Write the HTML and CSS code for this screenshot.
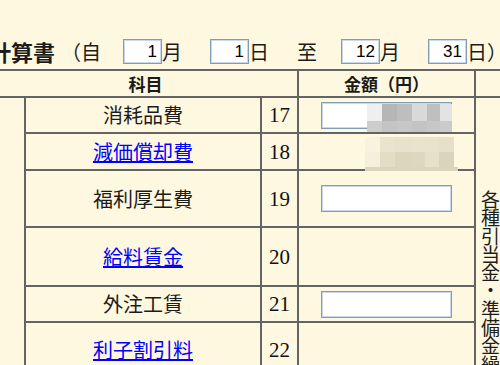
FILE: index.html
```html
<!DOCTYPE html>
<html lang="ja">
<head>
<meta charset="utf-8">
<title>計算書</title>
<link rel="stylesheet" href="styles.css">
</head>
<body>
<div class="page">
  <div class="title-row">
    <span class="doc-title">損益計算書</span>
    <span class="open">（自</span>
    <input class="date-in first" type="text" value="1"><span class="unit">月</span>
    <input class="date-in" type="text" value="1"><span class="unit">日</span>
    <span class="to">至</span>
    <input class="date-in mid" type="text" value="12"><span class="unit">月</span>
    <input class="date-in" type="text" value="31"><span class="unit">日）</span>
  </div>

  <table class="ledger">
    <colgroup>
      <col class="c-cat"><col class="c-name"><col class="c-no"><col class="c-amt"><col class="c-side">
    </colgroup>
    <tr class="h-head">
      <th colspan="3">科目</th>
      <th>金額（円）</th>
      <th></th>
    </tr>
    <tr class="h-17">
      <td class="cat" rowspan="8"></td>
      <td class="name">消耗品費</td>
      <td class="no">17</td>
      <td class="amt">
        <div class="field">
          <input class="amt-in" type="text">
          <div class="mosaic mosaic-gray"><i></i><i></i><i></i><i></i><i></i><i></i><i></i><i></i><i></i><i></i><i></i><i></i></div>
        </div>
      </td>
      <td class="side" rowspan="8">各種引当金・準備金繰入額</td>
    </tr>
    <tr class="h-18">
      <td class="name"><a href="#">減価償却費</a></td>
      <td class="no">18</td>
      <td class="amt amt-hidden">
        <div class="mosaic mosaic-beige"><i></i><i></i><i></i><i></i><i></i><i></i><i></i><i></i><i></i><i></i><i></i><i></i></div>
        <div class="mosaic-strip"></div>
      </td>
    </tr>
    <tr class="h-19">
      <td class="name">福利厚生費</td>
      <td class="no">19</td>
      <td class="amt"><input class="amt-in" type="text"></td>
    </tr>
    <tr class="h-20">
      <td class="name"><a href="#">給料賃金</a></td>
      <td class="no">20</td>
      <td class="amt"></td>
    </tr>
    <tr class="h-21">
      <td class="name">外注工賃</td>
      <td class="no">21</td>
      <td class="amt"><input class="amt-in" type="text"></td>
    </tr>
    <tr class="h-22">
      <td class="name"><a href="#">利子割引料</a></td>
      <td class="no">22</td>
      <td class="amt"></td>
    </tr>
    <tr class="h-more">
      <td class="name">租税公課</td>
      <td class="no">23</td>
      <td class="amt"></td>
    </tr>
    <tr class="h-more">
      <td class="name">雑費</td>
      <td class="no">24</td>
      <td class="amt"></td>
    </tr>
  </table>
</div>
</body>
</html>
```

FILE: styles.css
```css
* { box-sizing: border-box; }

html {
  overflow: hidden;
  background: #fff8e0;
}

body {
  margin: 0;
  background: #fff8e0;
  font-family: "Noto Sans CJK JP", "Noto Sans", sans-serif;
  color: #1c1c1c;
}

.page {
  width: 500px;
}

/* ---------- title line ---------- */
.title-row {
  display: flex;
  align-items: center;
  height: 25px;
  margin: 39px 0 5px -55px;
  white-space: nowrap;
  font-size: 20px;
  line-height: 25px;
}

.doc-title {
  font-size: 22px;
  font-weight: bold;
}

.open { margin-left: 6px; }

.date-in {
  width: 39px;
  height: 25px;
  margin: 0 0 0 28px;
  padding: 0 4px 0 0;
  border: 1px solid #7f9db9;
  box-shadow: inset 0 0 0 1px #c9d8ea;
  background: #fff;
  font-family: "Liberation Sans", Arial, sans-serif;
  font-size: 17px;
  color: #000;
  text-align: right;
  outline: none;
}

.date-in.first { margin-left: 22px; }
.date-in.mid { margin-left: 24px; }

.to { margin-left: 28px; }

/* ---------- table ---------- */
.ledger {
  border-collapse: collapse;
  table-layout: fixed;
  width: 510px;
  margin-left: -8px;
}

.c-cat { width: 32px; }
.c-name { width: 236px; }
.c-no { width: 37px; }
.c-amt { width: 177px; }
.c-side { width: 28px; }

.ledger th,
.ledger td {
  border: 2px solid #646464;
  padding: 0;
  text-align: center;
  vertical-align: middle;
}

.ledger th {
  font-size: 17px;
  font-weight: bold;
  line-height: 20px;
  color: #1a1a1a;
}

.h-head { height: 27px; }
.h-17 { height: 36px; }
.h-18 { height: 37px; }
.h-19 { height: 57px; }
.h-20 { height: 59px; }
.h-21 { height: 36px; }
.h-22 { height: 56px; }
.h-more { height: 40px; }

.name {
  font-size: 20px;
  line-height: 22px;
  white-space: nowrap;
}

.name a {
  color: #0000ff;
  text-decoration: underline;
}

.no {
  font-family: "Liberation Serif", "Times New Roman", serif;
  font-size: 21px;
  line-height: 22px;
  color: #111;
}

.amt-in {
  display: block;
  width: 131px;
  height: 27px;
  margin: 0 auto;
  border: 1px solid #7f9db9;
  box-shadow: inset 0 0 0 1px #c9d8ea;
  background: #fff;
  outline: none;
}

.field {
  position: relative;
  width: 131px;
  margin: 0 auto;
}

/* censor mosaics */
.mosaic {
  position: absolute;
  display: grid;
}

.mosaic i { display: block; }

.mosaic-gray {
  left: 46px;
  top: 2px;
  width: 85px;
  height: 28px;
  grid-template-columns: 15px 15px 15px 15px 13px 12px;
  grid-template-rows: 17px 11px;
}

.mosaic-gray i:nth-child(1) { background: #efefef; }
.mosaic-gray i:nth-child(2) { background: #b6b6b6; }
.mosaic-gray i:nth-child(3) { background: #bebebe; }
.mosaic-gray i:nth-child(4) { background: #d9d9d9; }
.mosaic-gray i:nth-child(5) { background: #bfbfbf; }
.mosaic-gray i:nth-child(6) { background: #e3e3e3; }
.mosaic-gray i:nth-child(7) { background: #cdcdcd; }
.mosaic-gray i:nth-child(8) { background: #c4c4c4; }
.mosaic-gray i:nth-child(9) { background: #c7c7c7; }
.mosaic-gray i:nth-child(10) { background: #c3c3c3; }
.mosaic-gray i:nth-child(11) { background: #c7c7c7; }
.mosaic-gray i:nth-child(12) { background: #cbcbcb; }

.amt-hidden { position: relative; }

.mosaic-beige {
  left: 66px;
  top: 3px;
  width: 89px;
  height: 30px;
  grid-template-columns: 15px 15px 15px 15px 14px 15px;
  grid-template-rows: 15px 15px;
}

.mosaic-beige i:nth-child(1) { background: #f8f2df; }
.mosaic-beige i:nth-child(2) { background: #eae3cd; }
.mosaic-beige i:nth-child(3) { background: #e8e1cb; }
.mosaic-beige i:nth-child(4) { background: #e9e3cd; }
.mosaic-beige i:nth-child(5) { background: #e8e2cc; }
.mosaic-beige i:nth-child(6) { background: #e6dfc9; }
.mosaic-beige i:nth-child(7) { background: #f5efdb; }
.mosaic-beige i:nth-child(8) { background: #e4ddc6; }
.mosaic-beige i:nth-child(9) { background: #ddd6be; }
.mosaic-beige i:nth-child(10) { background: #ded7bf; }
.mosaic-beige i:nth-child(11) { background: #e7e1cb; }
.mosaic-beige i:nth-child(12) { background: #dbd4bc; }

.mosaic-strip {
  position: absolute;
  left: 66px;
  top: 33px;
  width: 93px;
  height: 4px;
  background: #dcd4bc;
}

.ledger td.side {
  vertical-align: top;
  text-align: left;
  padding: 92px 0 0 5px;
  font-size: 19px;
  line-height: 18.3px;
  line-break: anywhere;
  word-break: break-all;
  color: #1c1c1c;
}
```
